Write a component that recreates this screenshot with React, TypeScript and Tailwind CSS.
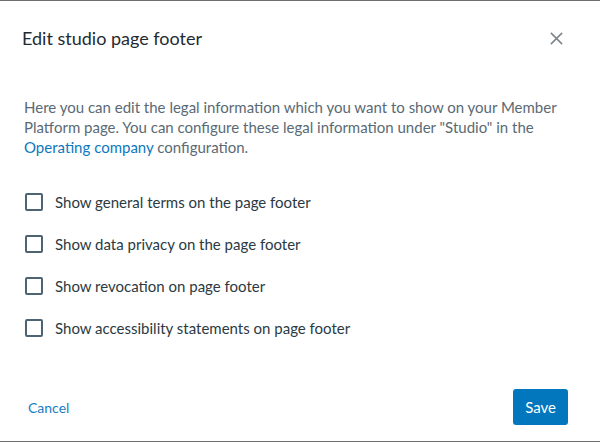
import { useState } from "react";

const OPTIONS = [
  "Show general terms on the page footer",
  "Show data privacy on the page footer",
  "Show revocation on page footer",
  "Show accessibility statements on page footer",
];

function Checkbox({ label }: { label: string }) {
  const [checked, setChecked] = useState(false);
  return (
    <label className="flex items-center gap-[12px] cursor-pointer select-none">
      <span
        onClick={() => setChecked(!checked)}
        className={`w-[18px] h-[18px] rounded-[2px] border-2 border-[#4d6572] flex items-center justify-center ${
          checked ? "bg-[#0277bd] border-[#0277bd]" : "bg-white"
        }`}
      >
        {checked && (
          <svg viewBox="0 0 12 12" className="w-3 h-3" fill="none" stroke="white" strokeWidth="2">
            <path d="M2 6.5l2.5 2.5L10 3.5" />
          </svg>
        )}
      </span>
      <span className="text-[15px] leading-[20px] text-[#2b3a42]">{label}</span>
    </label>
  );
}

export default function App() {
  return (
    <div
      className="w-[600px] h-[442px] bg-white border-y border-[#6f6f6f] flex flex-col"
      style={{ fontFamily: "Lato, 'Noto Sans', sans-serif" }}
    >
      <div className="flex items-center justify-between pl-[22px] pr-[36px] pt-[12px] h-[62px]">
        <h2 className="text-[18px] text-[#1f2b33]">Edit studio page footer</h2>
        <button type="button" className="text-[#7b8489]">
          <svg viewBox="0 0 16 16" className="w-[15px] h-[15px]" fill="none" stroke="currentColor" strokeWidth="1.6">
            <path d="M2 2l12 12M14 2L2 14" />
          </svg>
        </button>
      </div>

      <div className="px-[24px] pt-[34px]">
        <p className="text-[15px] leading-[20px] text-[#5a6a74] pr-[10px]">
          Here you can edit the legal information which you want to show on your Member Platform page. You can
          configure these legal information under "Studio" in the{" "}
          <a className="text-[#0d78be]">Operating company</a> configuration.
        </p>

        <div className="flex flex-col gap-[22px] mt-[35px] pl-[1px]">
          {OPTIONS.map((o) => (
            <Checkbox key={o} label={o} />
          ))}
        </div>
      </div>

      <div className="mt-auto flex items-center justify-between pl-[28px] pr-[32px] pb-[16px]">
        <button type="button" className="text-[14px] text-[#1a7cc1]">
          Cancel
        </button>
        <button type="button" className="h-[36px] px-[12px] rounded-[3px] bg-[#0277bd] text-white text-[15px]">
          Save
        </button>
      </div>
    </div>
  );
}
